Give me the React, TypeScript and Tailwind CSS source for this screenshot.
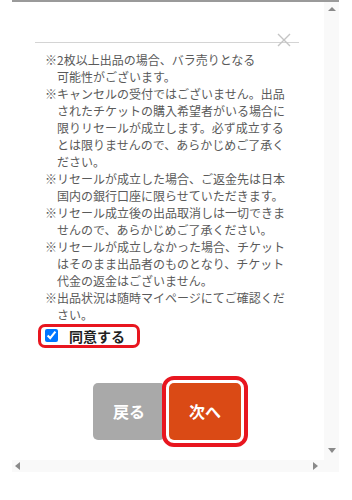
import React from "react";

type Note = {
    lines: string[];
};

const notes: Note[] = [
    { lines: ["※2枚以上出品の場合、バラ売りとなる", "可能性がございます。"] },
    {
        lines: [
            "※キャンセルの受付ではございません。出品",
            "されたチケットの購入希望者がいる場合に",
            "限りリセールが成立します。必ず成立する",
            "とは限りませんので、あらかじめご了承く",
            "ださい。",
        ],
    },
    { lines: ["※リセールが成立した場合、ご返金先は日本", "国内の銀行口座に限らせていただきます。"] },
    { lines: ["※リセール成立後の出品取消しは一切できま", "せんので、あらかじめご了承ください。"] },
    {
        lines: [
            "※リセールが成立しなかった場合、チケット",
            "はそのまま出品者のものとなり、チケット",
            "代金の返金はございません。",
        ],
    },
    { lines: ["※出品状況は随時マイページにてご確認くだ", "さい。"] },
];

export default function App() {
    return (
        <div className="w-[352px] h-[500px] bg-white pl-[12px] font-[family-name:'Noto_Sans_CJK_JP','Noto_Sans',sans-serif]">
            <div className="w-[327px] border-t-2 border-[#9a9a9a] flex">
                {/* left: content + horizontal scrollbar */}
                <div className="w-[312px] flex flex-col">
                    <div className="h-[458px] pl-[23px]">
                        <div className="w-[264px]">
                            <div className="relative h-[41px] border-b border-[#d4d4d4]">
                                <svg className="absolute right-[8px] top-[31px]" width="14" height="14" viewBox="0 0 14 14">
                                    <path d="M1 1 L13 13 M13 1 L1 13" stroke="#c4c4c4" strokeWidth="1.4" fill="none" />
                                </svg>
                            </div>

                            <div className="pt-[8px] pl-[10px] text-[12px] leading-[17px] text-[#5a5a5a]">
                                {notes.map((n, i) => (
                                    <div key={i}>
                                        {n.lines.map((l, j) => (
                                            <div key={j} className={`whitespace-nowrap ${j === 0 ? "" : "pl-[12px]"}`}>
                                                {l}
                                            </div>
                                        ))}
                                    </div>
                                ))}
                            </div>

                            <label className="mt-[-3px] ml-[3px] inline-flex items-center h-[24px] border-[3px] border-[#e8161f] rounded-[7px] pl-[4px] pr-[12px]">
                                <input type="checkbox" checked readOnly className="w-[13px] h-[13px] m-0 accent-[#0075ff]" />
                                <span className="ml-[11px] text-[14px] font-bold text-[#222] leading-none">同意する</span>
                            </label>

                            <div className="mt-[35px] flex justify-center gap-[4px]">
                                <button className="w-[72px] h-[57px] rounded-[5px] bg-[#a9a9a9] text-white font-bold text-[16px]">
                                    戻る
                                </button>
                                <button className="w-[72px] h-[57px] rounded-[5px] bg-[#da4a15] text-white font-bold text-[16px] outline-[4px] outline-solid outline-[#e8161f] outline-offset-[3px]">
                                    次へ
                                </button>
                            </div>
                        </div>
                    </div>

                    {/* horizontal scrollbar */}
                    <div className="h-[12px] bg-[#f9f9f9] flex items-center justify-between pl-[3px] pr-[6px]">
                        <div className="w-0 h-0 border-t-[4px] border-b-[4px] border-r-[5px] border-t-transparent border-b-transparent border-r-[#8a8a8a]" />
                        <div className="w-0 h-0 border-t-[4px] border-b-[4px] border-l-[5px] border-t-transparent border-b-transparent border-l-[#8a8a8a]" />
                    </div>
                </div>

                {/* vertical scrollbar */}
                <div className="w-[15px] flex flex-col bg-[#f9f9f9]">
                    <div className="h-[458px] flex flex-col items-center justify-between pt-[5px] pb-[7px]">
                        <div className="w-0 h-0 border-l-[4px] border-r-[4px] border-b-[4px] border-l-transparent border-r-transparent border-b-[#8a8a8a]" />
                        <div className="w-0 h-0 border-l-[4px] border-r-[4px] border-t-[5px] border-l-transparent border-r-transparent border-t-[#8a8a8a]" />
                    </div>
                    <div className="h-[12px]" />
                </div>
            </div>
        </div>
    );
}
